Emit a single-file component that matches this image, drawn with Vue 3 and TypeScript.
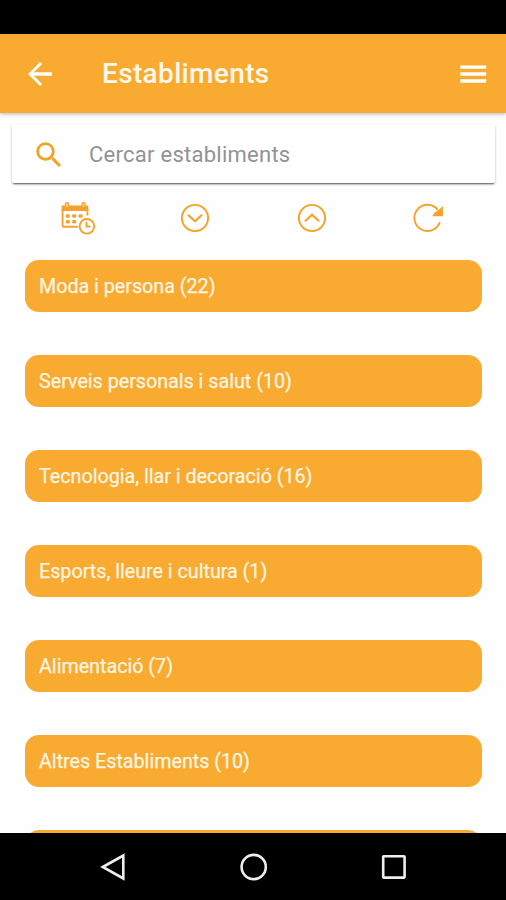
<script setup lang="ts">
interface Category {
  name: string
  count: number
}

const categories: Category[] = [
  { name: 'Moda i persona', count: 22 },
  { name: 'Serveis personals i salut', count: 10 },
  { name: 'Tecnologia, llar i decoració', count: 16 },
  { name: 'Esports, lleure i cultura', count: 1 },
  { name: 'Alimentació', count: 7 },
  { name: 'Altres Establiments', count: 10 },
]
</script>

<template>
  <div class="screen">
    <div class="status-bar"></div>
    <header class="app-bar">
      <svg class="back" viewBox="0 0 24 24" aria-label="Enrere">
        <path d="M20 10.900H7.830l5.590-5.490L12 4l-8 8 8 8 1.410-1.410L7.830 13.100H20v-2.200z" />
      </svg>
      <h1 class="title">Establiments</h1>
      <svg class="menu" viewBox="0 0 24 24" aria-label="Menú">
        <path d="M3 18h18v-2.3H3V18zm0-4.85h18v-2.3H3v2.3zM3 6v2.3h18V6H3z" />
      </svg>
    </header>

    <main class="content">
      <label class="search">
        <svg class="search-icon" viewBox="0 0 24 24">
          <path d="M15.5 14h-.79l-.28-.27A6.47 6.47 0 0 0 16 9.5 6.5 6.5 0 1 0 9.5 16c1.61 0 3.09-.59 4.23-1.57l.27.28v.79l5 4.99L20.49 19l-4.99-5zm-6 0C7.01 14 5 11.99 5 9.5S7.01 5 9.5 5 14 7.01 14 9.5 11.99 14 9.5 14z" />
        </svg>
        <span class="placeholder">Cercar establiments</span>
      </label>

      <div class="tools">
        <svg class="tool" viewBox="0 0 36 36">
          <path class="fill" d="M1.600 5.500H28.300v5.500H1.600z" />
          <path class="line" d="M2.600 9v16.800q0 .9.900.9h14.500M27.400 9v6.500" />
          <rect class="ring" x="5.400" y="2.600" width="3.200" height="5.200" rx="1.600" />
          <rect class="ring" x="22" y="2.600" width="3.200" height="5.200" rx="1.600" />
          <g class="fill">
            <rect x="5.800" y="14.200" width="4" height="3.600" rx="1.200" />
            <rect x="12.200" y="14.200" width="4" height="3.600" rx="1.200" />
            <rect x="18.600" y="14.200" width="4" height="3.600" rx="1.200" />
            <rect x="5.800" y="19.900" width="4" height="3.600" rx="1.200" />
            <rect x="12.200" y="19.900" width="4" height="3.600" rx="1.200" />
          </g>
          <circle class="line clock" cx="26.900" cy="26.300" r="7.300" />
          <path class="line" d="M26.500 21.800v4.700h4" />
        </svg>
        <svg class="tool" viewBox="0 0 36 36">
          <circle class="line" cx="18" cy="18" r="13.100" />
          <path class="line chevron" d="M11.500 15.300l6.500 6 6.500-6" />
        </svg>
        <svg class="tool" viewBox="0 0 36 36">
          <circle class="line" cx="18" cy="18" r="13.100" />
          <path class="line chevron" d="M11.500 20.700l6.500-6 6.500 6" />
        </svg>
        <svg class="tool" viewBox="0 0 36 36">
          <path class="line" d="M28.900 22A13.100 13.100 0 1 1 26.800 9.800" />
          <path class="fill" d="M31.900 6v10.300h-10.800l2.500-3.800 4-2.600z" />
        </svg>
      </div>

      <ul class="list">
        <li v-for="category in categories" :key="category.name" class="pill">
          {{ category.name }} ({{ category.count }})
        </li>
        <li class="pill"></li>
      </ul>
    </main>

    <nav class="nav-bar">
      <svg class="nav-icon" viewBox="0 0 32 32"><path d="M4.800 16L25.300 4.500v23z" /></svg>
      <svg class="nav-icon" viewBox="0 0 32 32"><circle cx="15.700" cy="16" r="12.100" /></svg>
      <svg class="nav-icon" viewBox="0 0 32 32"><rect x="5.200" y="5.200" width="21.400" height="21.400" rx=".5" /></svg>
    </nav>
  </div>
</template>

<style>
body {
  margin: 0;
  background: #fefefe;
}
</style>

<style scoped>
.screen {
  display: flex;
  flex-direction: column;
  height: 900px;
  overflow: hidden;
  background: #fefefe;
  font-family: Roboto, "Liberation Sans", sans-serif;
}

.status-bar {
  flex: none;
  height: 34px;
  background: #000;
}

.app-bar {
  position: relative;
  flex: none;
  display: flex;
  align-items: center;
  box-sizing: border-box;
  height: 79px;
  padding: 0 16px 0 22px;
  background: #f9aa31;
  box-shadow: 0 1px 4px rgba(60, 70, 110, 0.4);
}

.back {
  width: 36px;
  height: 36px;
  fill: #fff;
}

.title {
  flex: 1;
  margin: 0 0 0 44px;
  color: #fff8ea;
  font-size: 28px;
  font-weight: 500;
  letter-spacing: 0.35px;
  line-height: 36px;
}

.menu {
  width: 34.5px;
  height: 36px;
  fill: #fff;
}

.content {
  flex: 1;
  min-height: 0;
  overflow: hidden;
  padding: 11px 11px 0 12px;
}

.search {
  display: flex;
  align-items: center;
  height: 59px;
  padding-left: 20px;
  background: #fff;
  border-radius: 2px;
  box-shadow: 0 2px 2px -1px rgba(0, 0, 0, 0.6), 0 1px 3px rgba(0, 0, 0, 0.18);
}

.search-icon {
  width: 34px;
  height: 34px;
  margin-top: 2px;
  fill: #f4a223;
}

.placeholder {
  margin: 2px 0 0 23px;
  color: #929292;
  font-size: 22px;
  letter-spacing: 0.26px;
  line-height: 30px;
}

.tools {
  display: grid;
  grid-template-columns: repeat(4, 1fr);
  justify-items: center;
  align-items: center;
  height: 70px;
  margin: 0 8px;
}

.tool {
  width: 36px;
  height: 36px;
  overflow: visible;
}

.fill {
  fill: #f3a32c;
}

.line {
  fill: none;
  stroke: #f3a32c;
  stroke-width: 1.9;
}

.ring {
  fill: #fbd193;
  stroke: #f3a32c;
  stroke-width: 1.2;
}

.clock {
  fill: #fff;
}

.chevron {
  stroke-width: 2.2;
  stroke-linecap: round;
}

.list {
  display: flex;
  flex-direction: column;
  gap: 43.6px;
  margin: 0;
  padding: 7.4px 13px 0;
  list-style: none;
}

.pill {
  flex: none;
  box-sizing: border-box;
  height: 51.4px;
  padding-left: 14px;
  border-radius: 14px;
  background: #f9aa31;
  color: #fff6e2;
  font-size: 19.7px;
  line-height: 54px;
  -webkit-text-stroke: 0.25px #fff6e2;
}

.nav-bar {
  flex: none;
  display: flex;
  justify-content: center;
  gap: 108px;
  box-sizing: border-box;
  height: 67px;
  padding: 18px 0 0 2px;
  background: #000;
}

.nav-icon {
  width: 32px;
  height: 32px;
  fill: none;
  stroke: #eee;
  stroke-width: 2.6;
}
</style>
